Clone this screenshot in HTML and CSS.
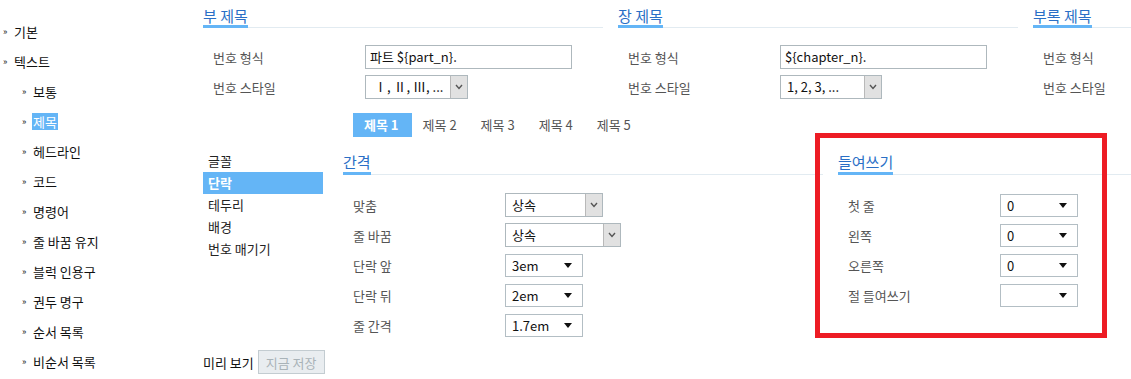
FILE: index.html
```html
<!DOCTYPE html>
<html>
<head>
<meta name="viewport" content="width=device-width, initial-scale=1">
<link rel="stylesheet" href="styles.css">
</head>
<body>

<div class="page">
  <!-- left tree -->
  <ul class="nav">
    <li class="top"><span class="mark">&raquo;</span><span class="item">기본</span></li>
    <li class="top"><span class="mark">&raquo;</span><span class="item">텍스트</span></li>
    <li class="sub"><span class="mark">&raquo;</span><span class="item">보통</span></li>
    <li class="sub"><span class="mark">&raquo;</span><span class="item sel">제목</span></li>
    <li class="sub"><span class="mark">&raquo;</span><span class="item">헤드라인</span></li>
    <li class="sub"><span class="mark">&raquo;</span><span class="item">코드</span></li>
    <li class="sub"><span class="mark">&raquo;</span><span class="item">명령어</span></li>
    <li class="sub"><span class="mark">&raquo;</span><span class="item">줄 바꿈 유지</span></li>
    <li class="sub"><span class="mark">&raquo;</span><span class="item">블럭 인용구</span></li>
    <li class="sub"><span class="mark">&raquo;</span><span class="item">권두 명구</span></li>
    <li class="sub"><span class="mark">&raquo;</span><span class="item">순서 목록</span></li>
    <li class="sub"><span class="mark">&raquo;</span><span class="item">비순서 목록</span></li>
  </ul>

  <div class="main">
    <div class="cols">
      <div class="col">
        <div class="head"><span>부 제목</span></div>
        <div class="form top-form">
          <div class="row">
            <label>번호 형식</label>
            <div class="text-input">파트 ${part_n}.</div>
          </div>
          <div class="row">
            <label>번호 스타일</label>
            <div class="combo w103">
              <span class="val roman">Ⅰ, Ⅱ, Ⅲ, ...</span>
              <span class="btn"><svg width="8" height="6" viewBox="0 0 8 6"><polyline points="1,1 4,4.5 7,1" fill="none" stroke="#555" stroke-width="1.4"/></svg></span>
            </div>
          </div>
        </div>
      </div>

      <div class="col">
        <div class="head"><span>장 제목</span></div>
        <div class="form top-form">
          <div class="row">
            <label>번호 형식</label>
            <div class="text-input">${chapter_n}.</div>
          </div>
          <div class="row">
            <label>번호 스타일</label>
            <div class="combo w102">
              <span class="val">1, 2, 3, ...</span>
              <span class="btn"><svg width="8" height="6" viewBox="0 0 8 6"><polyline points="1,1 4,4.5 7,1" fill="none" stroke="#555" stroke-width="1.4"/></svg></span>
            </div>
          </div>
        </div>
      </div>

      <div class="col">
        <div class="head"><span>부록 제목</span></div>
        <div class="form top-form">
          <div class="row"><label>번호 형식</label></div>
          <div class="row"><label>번호 스타일</label></div>
        </div>
      </div>
    </div>

    <div class="tabs">
      <span class="tab on">제목 1</span>
      <span class="tab">제목 2</span>
      <span class="tab">제목 3</span>
      <span class="tab">제목 4</span>
      <span class="tab">제목 5</span>
    </div>

    <div class="lower">
      <ul class="subnav">
        <li>글꼴</li>
        <li class="on">단락</li>
        <li>테두리</li>
        <li>배경</li>
        <li>번호 매기기</li>
      </ul>

      <div class="panel mid">
        <div class="head"><span>간격</span></div>
        <div class="form">
          <div class="row">
            <label>맞춤</label>
            <div class="combo w98">
              <span class="val">상속</span>
              <span class="btn"><svg width="8" height="6" viewBox="0 0 8 6"><polyline points="1,1 4,4.5 7,1" fill="none" stroke="#555" stroke-width="1.4"/></svg></span>
            </div>
          </div>
          <div class="row">
            <label>줄 바꿈</label>
            <div class="combo w116">
              <span class="val">상속</span>
              <span class="btn"><svg width="8" height="6" viewBox="0 0 8 6"><polyline points="1,1 4,4.5 7,1" fill="none" stroke="#555" stroke-width="1.4"/></svg></span>
            </div>
          </div>
          <div class="row">
            <label>단락 앞</label>
            <div class="dropdown"><span class="val">3em</span><svg width="8" height="5" viewBox="0 0 8 5"><polygon points="0,0 8,0 4,5" fill="#111"/></svg></div>
          </div>
          <div class="row">
            <label>단락 뒤</label>
            <div class="dropdown"><span class="val">2em</span><svg width="8" height="5" viewBox="0 0 8 5"><polygon points="0,0 8,0 4,5" fill="#111"/></svg></div>
          </div>
          <div class="row">
            <label>줄 간격</label>
            <div class="dropdown"><span class="val">1.7em</span><svg width="8" height="5" viewBox="0 0 8 5"><polygon points="0,0 8,0 4,5" fill="#111"/></svg></div>
          </div>
        </div>
      </div>

      <div class="panel side">
        <div class="head"><span>들여쓰기</span></div>
        <div class="form">
          <div class="row">
            <label>첫 줄</label>
            <div class="dropdown"><span class="val">0</span><svg width="8" height="5" viewBox="0 0 8 5"><polygon points="0,0 8,0 4,5" fill="#111"/></svg></div>
          </div>
          <div class="row">
            <label>왼쪽</label>
            <div class="dropdown"><span class="val">0</span><svg width="8" height="5" viewBox="0 0 8 5"><polygon points="0,0 8,0 4,5" fill="#111"/></svg></div>
          </div>
          <div class="row">
            <label>오른쪽</label>
            <div class="dropdown"><span class="val">0</span><svg width="8" height="5" viewBox="0 0 8 5"><polygon points="0,0 8,0 4,5" fill="#111"/></svg></div>
          </div>
          <div class="row">
            <label>절 들여쓰기</label>
            <div class="dropdown"><span class="val"></span><svg width="8" height="5" viewBox="0 0 8 5"><polygon points="0,0 8,0 4,5" fill="#111"/></svg></div>
          </div>
        </div>
      </div>
    </div>

    <div class="actions">
      <span class="preview">미리 보기</span>
      <button class="save" disabled>지금 저장</button>
    </div>
  </div>
</div>

<!-- red annotation frame -->
<div class="annot"></div>

</body>
</html>
```

FILE: styles.css
```css
html, body {
  margin: 0;
  padding: 0;
  overflow: hidden;
}

body {
  font-family: "Noto Sans CJK KR", sans-serif;
  font-size: 13px;
  color: #222;
  background: #fff;
  position: relative;
  width: 1131px;
  height: 379px;
}

.page {
  display: flex;
  align-items: flex-start;
}

/* Left tree */
.nav {
  list-style: none;
  margin: 0;
  padding: 16px 0 0 0;
  width: 203px;
  flex: 0 0 203px;
}

.nav li {
  height: 30px;
  display: flex;
  align-items: center;
  color: #111;
}

.nav li.top { padding-left: 3px; }
.nav li.sub { padding-left: 22px; }

.nav .mark {
  font-size: 9px;
  width: 10px;
  line-height: 10px;
  padding-top: 2px;
}

.nav .item {
  line-height: 17px;
  height: 17px;
  padding: 0 1px;
}

.nav .item.sel {
  background: #64b5f6;
  color: #fff;
}

/* Main */
.main {
  width: 928px;
  flex: 0 0 928px;
  overflow: hidden;
}

.cols {
  display: flex;
  gap: 15px;
}

.col {
  flex: 0 0 400px;
}

.head {
  height: 27px;
  border-bottom: 1px solid #e2ebf1;
}

.head span {
  display: inline-block;
  font-size: 15px;
  line-height: 17px;
  padding: 7px 0 1px;
  color: #2a6fc6;
  border-bottom: 3px solid #64b5f6;
}

.form { margin-top: 15px; }
.top-form { margin-top: 14px; }

.row {
  height: 30px;
  display: flex;
  align-items: center;
}

.row label {
  width: 152px;
  padding-left: 10px;
  flex: 0 0 152px;
  color: #555;
}

.text-input {
  box-sizing: border-box;
  width: 207px;
  height: 24px;
  border: 1px solid #aeb8bd;
  padding: 0 4px;
  line-height: 22px;
  color: #111;
}

/* Classic select with a button */
.combo {
  box-sizing: border-box;
  height: 24px;
  border: 1px solid #aeb8bd;
  display: flex;
  align-items: stretch;
  color: #111;
}

.combo .val {
  flex: 1;
  padding-left: 6px;
  line-height: 22px;
}

.combo .val.roman { padding-left: 8px; }

.combo .btn {
  width: 16px;
  background: #e1e1e1;
  border-left: 1px solid #b9b9b9;
  display: flex;
  align-items: center;
  justify-content: center;
}

.w98 { width: 98px; }
.w102 { width: 102px; }
.w103 { width: 103px; }
.w116 { width: 116px; }

/* Flat select */
.dropdown {
  box-sizing: border-box;
  width: 78px;
  height: 23px;
  border: 1px solid #b3bec4;
  display: flex;
  align-items: center;
  padding: 0 10px 0 6px;
  color: #111;
}

.dropdown .val { flex: 1; }

/* Tabs */
.tabs {
  display: flex;
  margin: 11px 0 0 150px;
}

.tab {
  padding: 0 13px 0 11px;
  line-height: 24px;
  color: #555;
}

.tab.on {
  background: #64b5f6;
  color: #fff;
  font-weight: bold;
}

/* Lower part */
.lower {
  display: flex;
  align-items: flex-start;
  margin-top: 13px;
}

.subnav {
  list-style: none;
  margin: 0;
  padding: 0;
  width: 120px;
  flex: 0 0 120px;
}

.subnav li {
  height: 22px;
  line-height: 22px;
  padding-left: 5px;
  color: #222;
}

.subnav li.on {
  background: #64b5f6;
  color: #fff;
  font-weight: bold;
}

.panel .head { height: 24px; }

.panel .head span {
  padding: 3px 0 2px;
}

.mid {
  width: 480px;
  flex: 0 0 480px;
  margin-left: 20px;
}

.side {
  width: 300px;
  flex: 0 0 300px;
  margin-left: 15px;
}

/* Bottom actions */
.actions {
  display: flex;
  align-items: center;
  gap: 4px;
  margin-top: 10px;
}

.preview { color: #111; }

.save {
  font-family: inherit;
  font-size: 13px;
  height: 24px;
  padding: 0 7px;
  background: #e9edf0;
  border: 1px solid #c3ccd1;
  color: #a9b3b8;
  border-radius: 0;
}

/* Annotation frame */
.annot {
  position: absolute;
  left: 815px;
  top: 133px;
  width: 292px;
  height: 205px;
  box-sizing: border-box;
  border: 5px solid #ed1c24;
}
```
